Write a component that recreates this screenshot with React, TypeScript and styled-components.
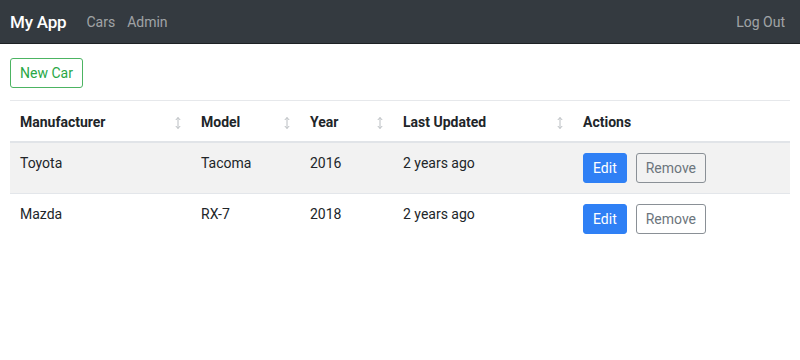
import React from "react";
import styled, { createGlobalStyle } from "styled-components";

const GlobalStyle = createGlobalStyle`
  html, body {
    margin: 0;
    padding: 0;
    background: #fff;
    font-family: Roboto, "Liberation Sans", Arial, sans-serif;
    color: #212529;
  }
  * {
    box-sizing: border-box;
  }
`;

const Navbar = styled.nav`
  height: 44px;
  background: #343a40;
  border-bottom: 1px solid #1d2124;
  display: flex;
  align-items: center;
  padding: 0 15px 0 10px;
`;

const Brand = styled.a`
  color: #fff;
  font-size: 17px;
  font-weight: 500;
  margin-right: 20px;
  text-decoration: none;
  letter-spacing: -0.2px;
`;

const NavLink = styled.a<{ $right?: boolean }>`
  color: rgba(255, 255, 255, 0.55);
  font-size: 14px;
  text-decoration: none;
  margin-right: 12px;
  margin-left: ${(p) => (p.$right ? "auto" : "0")};
  ${(p) => p.$right && "margin-right: 0;"}
`;

const Main = styled.main`
  padding: 14px 10px 0;
`;

const Button = styled.button<{ $variant: "success" | "primary" | "secondary" }>`
  font-family: inherit;
  font-size: 14px;
  line-height: 21px;
  padding: 3.5px 9px;
  border-radius: 3px;
  cursor: pointer;
  border: 1px solid
    ${(p) =>
      p.$variant === "success"
        ? "#4cb462"
        : p.$variant === "primary"
        ? "#2f80f5"
        : "#8a9096"};
  background: ${(p) => (p.$variant === "primary" ? "#2f80f5" : "transparent")};
  color: ${(p) =>
    p.$variant === "success"
      ? "#28a745"
      : p.$variant === "primary"
      ? "#fff"
      : "#6c757d"};
`;

const Table = styled.table`
  width: 100%;
  margin-top: 12px;
  border-collapse: collapse;
  font-size: 14px;
  border-top: 1px solid #e6e8eb;
`;

const Th = styled.th<{ $w: number }>`
  width: ${(p) => p.$w}px;
  text-align: left;
  font-weight: 700;
  padding: 11px 10px 8px;
  line-height: 21px;
  border-bottom: 2px solid #e1e4e8;
`;

const HeadInner = styled.div`
  display: flex;
  align-items: center;
  justify-content: space-between;
`;

const Row = styled.tr<{ $striped?: boolean }>`
  background: ${(p) => (p.$striped ? "#f2f2f2" : "transparent")};
  border-bottom: 1px solid #e3e6ea;
  &:last-child {
    border-bottom: none;
  }
`;

const Td = styled.td`
  padding: 10px;
  line-height: 21px;
  vertical-align: top;
`;

const Actions = styled.div`
  display: flex;
  gap: 9px;
`;

const SortIcon = () => (
  <svg width="8" height="14" viewBox="0 0 8 14" style={{ marginRight: "-1px" }}>
    <path d="M4 1.5 V12.5" stroke="#babec2" strokeWidth="1" />
    <path d="M1.8 4 L4 1.5 L6.2 4" stroke="#babec2" strokeWidth="1" fill="none" />
    <path d="M1.8 10 L4 12.5 L6.2 10" stroke="#babec2" strokeWidth="1" fill="none" />
  </svg>
);

const columns = [
  { label: "Manufacturer", w: 181, sort: true },
  { label: "Model", w: 109, sort: true },
  { label: "Year", w: 93, sort: true },
  { label: "Last Updated", w: 180, sort: true },
  { label: "Actions", w: 217, sort: false },
];

const cars = [
  { make: "Toyota", model: "Tacoma", year: 2016, updated: "2 years ago" },
  { make: "Mazda", model: "RX-7", year: 2018, updated: "2 years ago" },
];

export default function App() {
  return (
    <>
      <GlobalStyle />
      <Navbar>
        <Brand href="#">My App</Brand>
        <NavLink href="#">Cars</NavLink>
        <NavLink href="#">Admin</NavLink>
        <NavLink href="#" $right>
          Log Out
        </NavLink>
      </Navbar>
      <Main>
        <Button $variant="success">New Car</Button>
        <Table>
          <thead>
            <tr>
              {columns.map((c) => (
                <Th key={c.label} $w={c.w}>
                  <HeadInner>
                    <span>{c.label}</span>
                    {c.sort && <SortIcon />}
                  </HeadInner>
                </Th>
              ))}
            </tr>
          </thead>
          <tbody>
            {cars.map((car, i) => (
              <Row key={car.make} $striped={i % 2 === 0}>
                <Td>{car.make}</Td>
                <Td>{car.model}</Td>
                <Td>{car.year}</Td>
                <Td>{car.updated}</Td>
                <Td>
                  <Actions>
                    <Button $variant="primary">Edit</Button>
                    <Button $variant="secondary">Remove</Button>
                  </Actions>
                </Td>
              </Row>
            ))}
          </tbody>
        </Table>
      </Main>
    </>
  );
}
